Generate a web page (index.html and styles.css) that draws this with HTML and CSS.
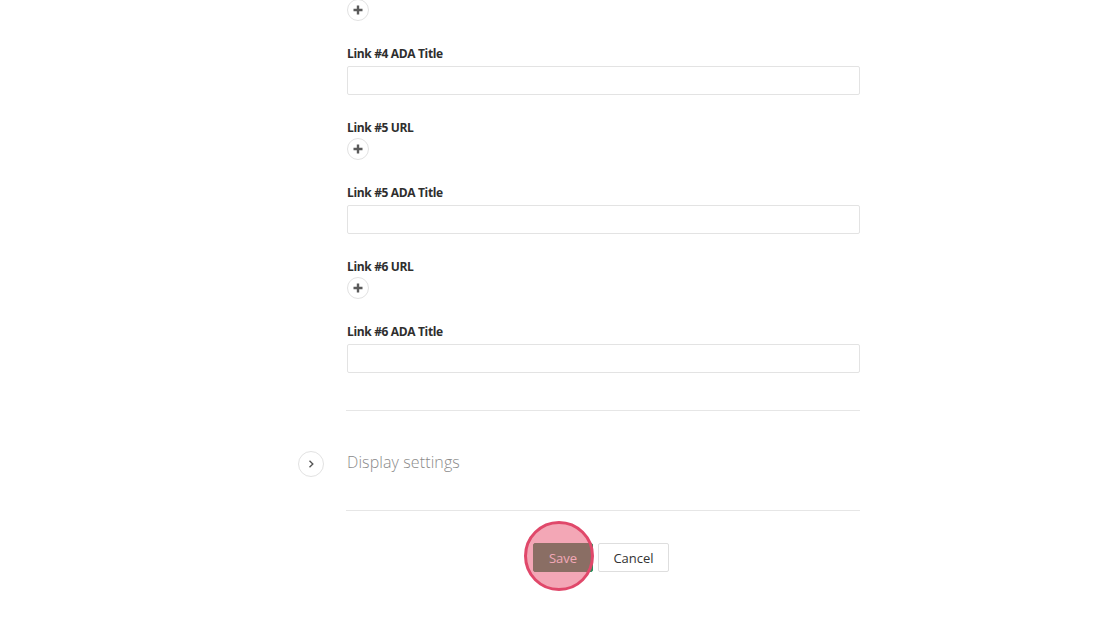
FILE: index.html
```html
<!DOCTYPE html>
<html>
<head>
<meta charset="utf-8">
<link rel="stylesheet" href="styles.css">
</head>
<body>
<div class="form">
  <div class="field field-url">
    <button class="add" type="button"><svg width="10" height="10" viewBox="0 0 10 10"><path d="M5 0.5V9.5M0.5 5H9.5" stroke="#5a5a5a" stroke-width="2.4"/></svg></button>
  </div>
  <div class="field">
    <label class="label">Link #4 ADA Title</label>
    <input class="input" type="text">
  </div>
  <div class="field field-url">
    <label class="label">Link #5 URL</label>
    <button class="add" type="button"><svg width="10" height="10" viewBox="0 0 10 10"><path d="M5 0.5V9.5M0.5 5H9.5" stroke="#5a5a5a" stroke-width="2.4"/></svg></button>
  </div>
  <div class="field">
    <label class="label">Link #5 ADA Title</label>
    <input class="input" type="text">
  </div>
  <div class="field field-url">
    <label class="label">Link #6 URL</label>
    <button class="add" type="button"><svg width="10" height="10" viewBox="0 0 10 10"><path d="M5 0.5V9.5M0.5 5H9.5" stroke="#5a5a5a" stroke-width="2.4"/></svg></button>
  </div>
  <div class="field">
    <label class="label">Link #6 ADA Title</label>
    <input class="input" type="text">
  </div>

  <div class="section">
    <button class="toggle" type="button"><svg width="10" height="10" viewBox="0 0 10 10"><path d="M3.5 1.8L6.8 5L3.5 8.2" fill="none" stroke="#555" stroke-width="1.4"/></svg></button>
    <span class="section-title">Display settings</span>
  </div>

  <div class="actions">
    <div class="highlight"></div>
    <button class="btn btn-save" type="button">Save</button>
    <button class="btn btn-cancel" type="button">Cancel</button>
  </div>
</div>
</body>
</html>
```
FILE: styles.css
```css
html, body {
  margin: 0;
  padding: 0;
  background: #fff;
  font-family: "Open Sans", "Liberation Sans", sans-serif;
  color: #333;
}
.form {
  width: 513px;
  margin-left: 347px;
  margin-top: -1px;
  padding-bottom: 60px;
}
.field {
  display: flex;
  flex-direction: column;
  align-items: flex-start;
  margin-bottom: 23px;
}
.label {
  font-family: "Open Sans", "Liberation Sans", sans-serif;
  font-size: 12px;
  font-weight: 700;
  letter-spacing: -0.35px;
  line-height: 18px;
  color: #2e2e2e;
  margin-bottom: 4px;
  position: relative;
  top: 1px;
}
.field-url .label {
  margin-bottom: 2px;
}
.add {
  width: 22px;
  height: 22px;
  border-radius: 50%;
  border: 1px solid #e2e2e2;
  background: #fff;
  padding: 0;
  display: flex;
  align-items: center;
  justify-content: center;
}
.input {
  box-sizing: border-box;
  width: 513px;
  height: 29px;
  border: 1px solid #e3e3e3;
  border-radius: 2px;
  margin: 0;
  padding: 0 8px;
  background: #fff;
}
.section {
  margin-top: 37px;
  height: 99px;
  display: flex;
  align-items: center;
  gap: 23px;
  margin-left: -49px;
  width: 562px;
  border-top: 1px solid #e6e6e6;
  border-bottom: 1px solid #e6e6e6;
  border-image: linear-gradient(to right, transparent 49px, #e6e6e6 49px) 1;
}
.toggle {
  width: 26px;
  height: 26px;
  border-radius: 50%;
  border: 1px solid #e2e2e2;
  background: #fff;
  padding: 0;
  display: flex;
  align-items: center;
  justify-content: center;
  margin-top: 6px;
  margin-left: 0;
}
.section-title {
  font-size: 16px;
  font-weight: 300;
  color: #8a8a8a;
  margin-top: 3px;
  letter-spacing: 0.1px;
}
.actions {
  position: relative;
  display: flex;
  gap: 5px;
  margin-top: 32px;
  padding-left: 186px;
  height: 29px;
}
.btn {
  box-sizing: border-box;
  height: 29px;
  border-radius: 2px;
  font-family: "Open Sans", "Liberation Sans", sans-serif;
  font-size: 13px;
  padding: 0;
  margin: 0;
}
.btn-save {
  width: 60px;
  background: #2d8d5b;
  color: #fff;
  border: 1px solid #2d8d5b;
}
.btn-cancel {
  width: 71px;
  background: #fff;
  color: #333;
  border: 1px solid #dedede;
}
.highlight {
  position: absolute;
  z-index: 2;
  left: 177px;
  top: -22px;
  width: 70px;
  height: 70px;
  box-sizing: border-box;
  border-radius: 50%;
  border: 3px solid #e0486a;
  background: rgba(231, 79, 109, 0.5);
  pointer-events: none;
}
```
